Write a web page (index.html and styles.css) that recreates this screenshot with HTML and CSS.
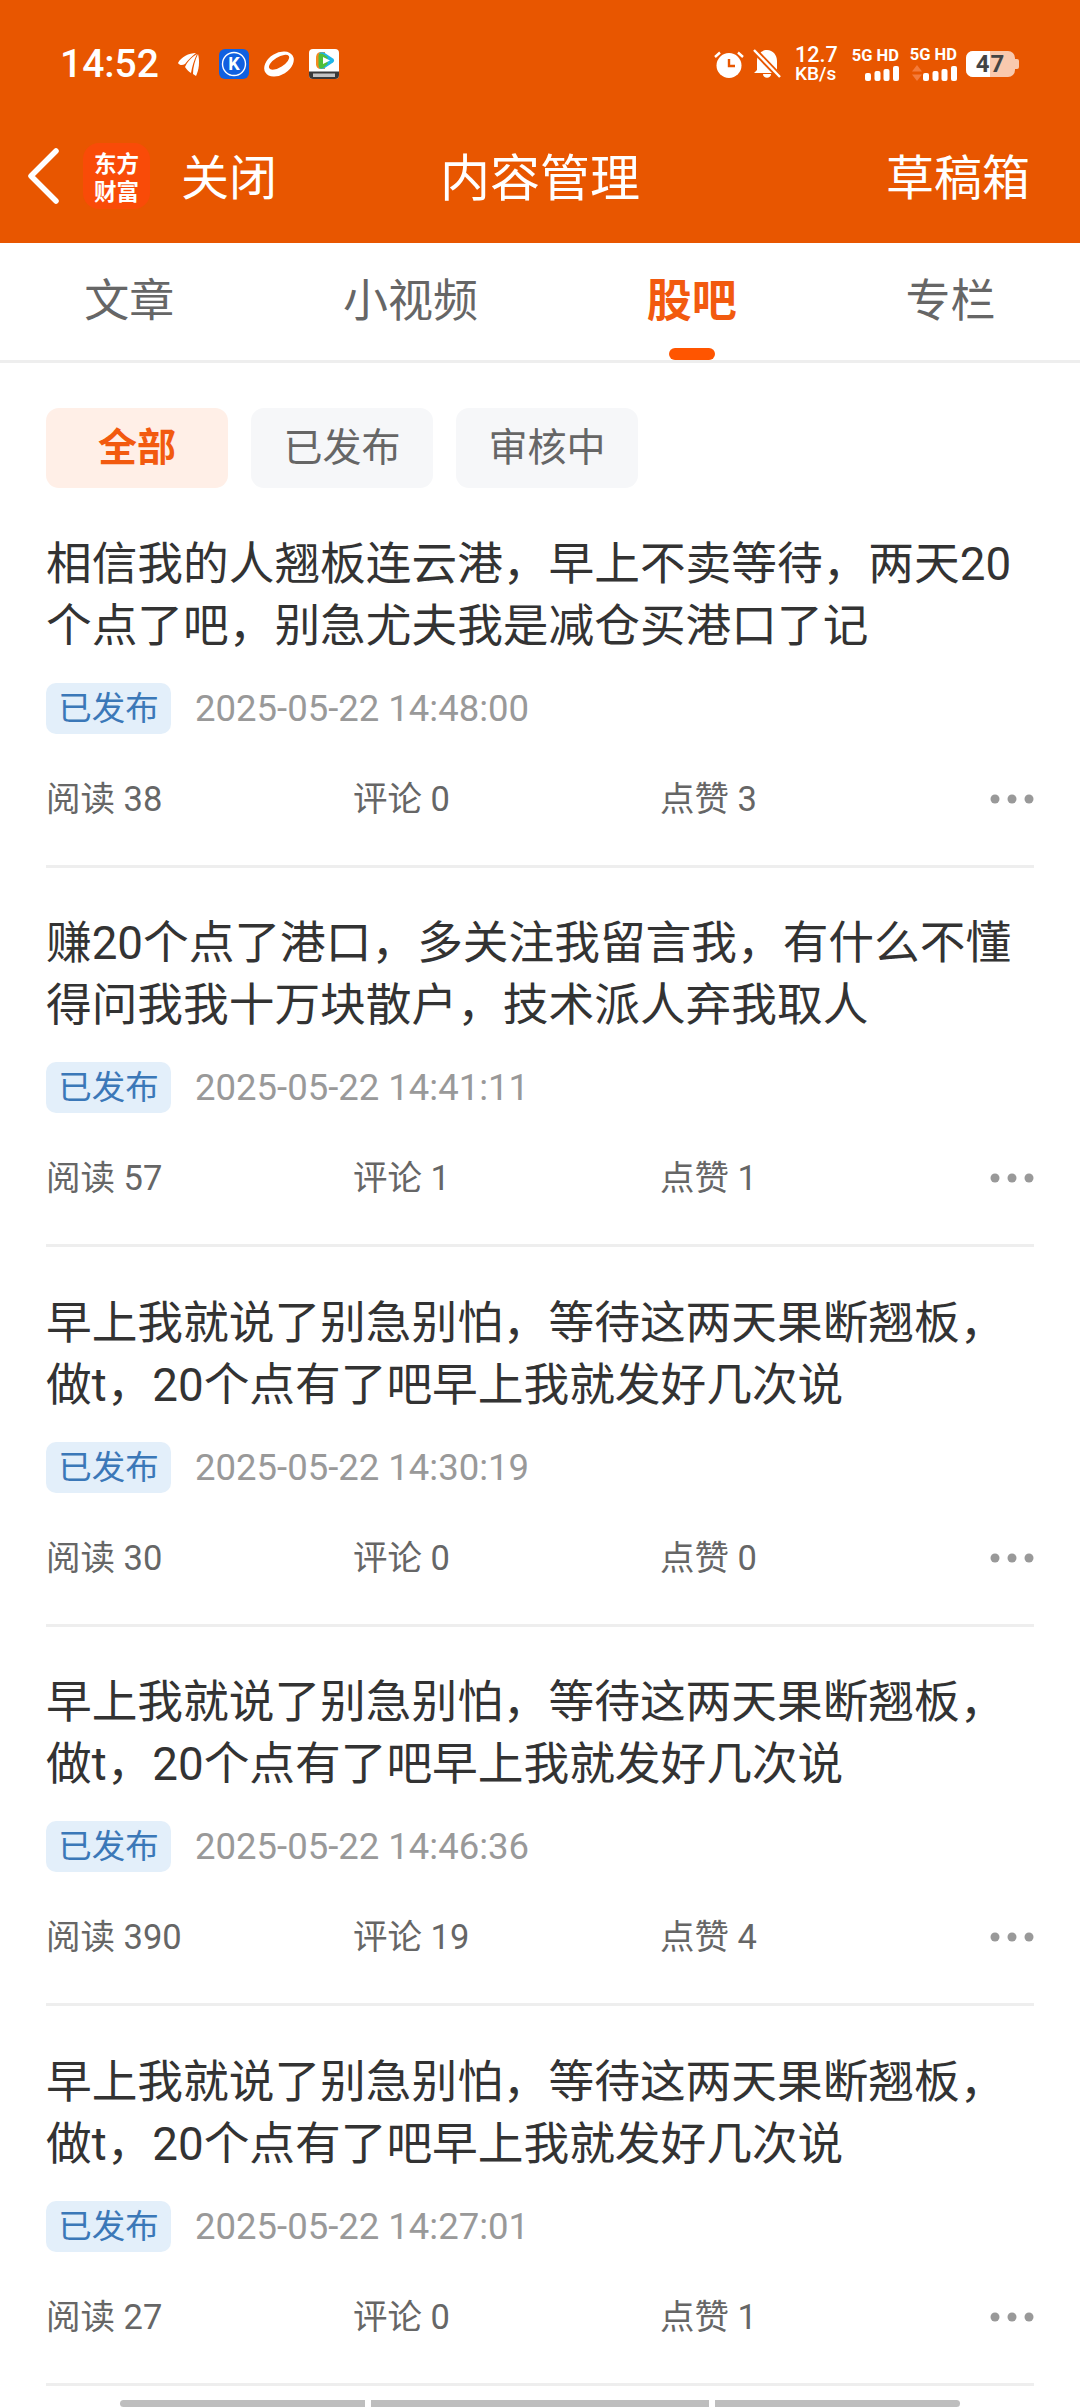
FILE: index.html
```html
<!DOCTYPE html>
<html lang="zh-CN">
<head>
<meta charset="utf-8">
<title>内容管理</title>
<link rel="stylesheet" href="styles.css">
</head>
<body>
<div class="page">
  <header class="header">
    <div class="status">
      <div class="status-left">
        <span class="time">14:52</span>
        <svg class="ic-feather" viewBox="0 0 24 24"><path fill="#fff" d="M19 1C12 1 4 5 1 11C3 14 6 13 8 12C11 8 15 4 19 1Z"/><path fill="#fff" d="M20 2C15 5 10 10 8 15C10 18 12 20 14 21C15 15 17 8 20 2Z"/><path fill="#fff" d="M21 2C18 8 16 15 16 22L19 24C22 18 23 9 21 2Z"/></svg>
        <svg class="ic-k" viewBox="0 0 30 30"><rect width="30" height="30" rx="6" fill="#1060E0"/><circle cx="15" cy="15" r="11.5" fill="none" stroke="#fff" stroke-width="1.4"/><text x="15" y="21" text-anchor="middle" class="k-letter">K</text></svg>
        <svg class="ic-orbit" viewBox="0 0 30 30"><ellipse cx="15" cy="15" rx="16" ry="11" transform="rotate(-32 15 15)" fill="#fff"/><ellipse cx="16" cy="13.500" rx="11.500" ry="5" transform="rotate(-32 15 15)" fill="#E85600"/></svg>
        <svg class="ic-video" viewBox="0 0 30 30"><rect width="30" height="30" rx="4" fill="#fff"/><path d="M0 22.500H30V26A4 4 0 0 1 26 30H4A4 4 0 0 1 0 26Z" fill="#3a3a3a"/><rect x="4" y="24.500" width="22" height="3.500" fill="#c4c4c4"/><path d="M7 9C7 5 9 3 12 3H16V20H12C9 20 7 18 7 15Z" fill="#F58A1F"/><path d="M10 5C10 3 13 3 15 3.500L24 9.500C25.500 10.500 25.500 12.500 24 13.500L15 19.500C13 20.500 10 20 10 18Z" fill="#1FB5E8"/><path d="M9.500 7C9.500 4 12 4 14 5L18.500 8 18.500 15 14 19C12 20 9.500 19 9.500 16Z" fill="#4FBF3A"/><path d="M14 8L21 11.500 14 15Z" fill="#fff"/></svg>
      </div>
      <div class="status-right">
        <svg class="ic-alarm" viewBox="0 0 30 28"><circle cx="15" cy="15.500" r="12.500" fill="#fff"/><path d="M15 9V16H21" fill="none" stroke="#E85600" stroke-width="2.400"/><path d="M1 7L6 2.500M29 7L24 2.500" stroke="#fff" stroke-width="2.400"/></svg>
        <svg class="ic-bell" viewBox="0 0 28 30"><path fill="#fff" d="M14 1C20 1 24 6 24 12V21L27 24H1L4 21V12C4 6 8 1 14 1Z"/><path fill="#fff" d="M10 25H18C18 30 10 30 10 25Z"/><path d="M1 1L27 28" stroke="#E85600" stroke-width="6"/><path d="M1 1L27 28" stroke="#fff" stroke-width="2.400"/></svg>
        <div class="speed"><span class="speed-num">12.7</span><span class="speed-unit">KB/s</span></div>
        <div class="net net-a">
          <span class="net-label">5G HD</span>
          <svg class="bars" viewBox="0 0 34 15"><rect y="7" width="6" height="8" rx="2" fill="#fff"/><rect x="9.500" y="5" width="6" height="10" rx="2" fill="#fff"/><rect x="18.500" y="3" width="6" height="12" rx="2" fill="#fff"/><rect x="28" width="6" height="15" rx="2" fill="#fff"/></svg>
        </div>
        <div class="net net-b">
          <span class="net-label">5G HD</span>
          <div class="net-row">
            <svg class="arrows" viewBox="0 0 10 16"><path d="M5 0L10 6.500H0Z" fill="#F47C3C"/><path d="M5 16L10 9.500H0Z" fill="#F47C3C"/></svg>
            <svg class="bars" viewBox="0 0 34 15"><rect y="7" width="6" height="8" rx="2" fill="#fff"/><rect x="9.500" y="5" width="6" height="10" rx="2" fill="#fff"/><rect x="18.500" y="3" width="6" height="12" rx="2" fill="#fff"/><rect x="28" width="6" height="15" rx="2" fill="#fff"/></svg>
          </div>
        </div>
        <div class="battery"><div class="battery-body"><span class="battery-fill"></span><span class="battery-num">47</span></div><span class="battery-nub"></span></div>
      </div>
    </div>
    <nav class="nav">
      <div class="nav-left">
        <svg class="back" viewBox="0 0 32 56"><path d="M29 3L4 28 29 53" fill="none" stroke="#fff" stroke-width="5.500" stroke-linecap="round" stroke-linejoin="round"/></svg>
        <div class="logo"><span>东方</span><span>财富</span></div>
        <span class="close">关闭</span>
      </div>
      <div class="nav-title">内容管理</div>
      <div class="nav-right">草稿箱</div>
    </nav>
  </header>

  <div class="tabs">
    <div class="tab">文章</div>
    <div class="tab">小视频</div>
    <div class="tab tab-active">股吧</div>
    <div class="tab">专栏</div>
  </div>

  <div class="chips">
    <div class="chip chip-active">全部</div>
    <div class="chip">已发布</div>
    <div class="chip">审核中</div>
  </div>

  <article class="item">
    <p class="title">相信我的人翘板连云港，早上不卖等待，两天20个点了吧，别急尤夫我是减仓买港口了记</p>
    <div class="meta"><span class="tag">已发布</span><span class="date">2025-05-22 14:48:00</span></div>
    <div class="stats"><span>阅读 38</span><span>评论 0</span><span>点赞 3</span><svg class="more" viewBox="0 0 44 10"><circle cx="5" cy="5" r="4.500"/><circle cx="22" cy="5" r="4.500"/><circle cx="39" cy="5" r="4.500"/></svg></div>
  </article>
  <article class="item">
    <p class="title">赚20个点了港口，多关注我留言我，有什么不懂得问我我十万块散户，技术派人弃我取人</p>
    <div class="meta"><span class="tag">已发布</span><span class="date">2025-05-22 14:41:11</span></div>
    <div class="stats"><span>阅读 57</span><span>评论 1</span><span>点赞 1</span><svg class="more" viewBox="0 0 44 10"><circle cx="5" cy="5" r="4.500"/><circle cx="22" cy="5" r="4.500"/><circle cx="39" cy="5" r="4.500"/></svg></div>
  </article>
  <article class="item">
    <p class="title">早上我就说了别急别怕，等待这两天果断翘板，做t，20个点有了吧早上我就发好几次说</p>
    <div class="meta"><span class="tag">已发布</span><span class="date">2025-05-22 14:30:19</span></div>
    <div class="stats"><span>阅读 30</span><span>评论 0</span><span>点赞 0</span><svg class="more" viewBox="0 0 44 10"><circle cx="5" cy="5" r="4.500"/><circle cx="22" cy="5" r="4.500"/><circle cx="39" cy="5" r="4.500"/></svg></div>
  </article>
  <article class="item">
    <p class="title">早上我就说了别急别怕，等待这两天果断翘板，做t，20个点有了吧早上我就发好几次说</p>
    <div class="meta"><span class="tag">已发布</span><span class="date">2025-05-22 14:46:36</span></div>
    <div class="stats"><span>阅读 390</span><span>评论 19</span><span>点赞 4</span><svg class="more" viewBox="0 0 44 10"><circle cx="5" cy="5" r="4.500"/><circle cx="22" cy="5" r="4.500"/><circle cx="39" cy="5" r="4.500"/></svg></div>
  </article>
  <article class="item">
    <p class="title">早上我就说了别急别怕，等待这两天果断翘板，做t，20个点有了吧早上我就发好几次说</p>
    <div class="meta"><span class="tag">已发布</span><span class="date">2025-05-22 14:27:01</span></div>
    <div class="stats"><span>阅读 27</span><span>评论 0</span><span>点赞 1</span><svg class="more" viewBox="0 0 44 10"><circle cx="5" cy="5" r="4.500"/><circle cx="22" cy="5" r="4.500"/><circle cx="39" cy="5" r="4.500"/></svg></div>
  </article>

  <div class="scroll">
    <span class="seg seg-first"></span>
    <span class="seg seg-mid"></span>
    <span class="seg seg-last"></span>
  </div>
</div>
</body>
</html>
```
FILE: styles.css
```css
* { box-sizing: border-box; }
html, body { margin: 0; padding: 0; }
body {
  background: #fff;
  font-family: Roboto, "Noto Sans CJK SC", sans-serif;
  color: #333;
}
.page { width: 1080px; height: 2408px; overflow: hidden; }

/* header */
.header { background: #E85600; height: 243px; color: #fff; }
.status {
  height: 128px;
  display: flex;
  justify-content: space-between;
  align-items: center;
  padding: 0 61px 0 60px;
}
.status-left, .status-right { display: flex; align-items: center; }
.time { font-size: 39px; font-weight: 500; line-height: 40px; width: 96px; }
.ic-feather { width: 24px; height: 24px; margin-left: 21px; }
.ic-k { width: 30px; height: 30px; margin-left: 18px; }
.k-letter { font: 700 18px Roboto, sans-serif; fill: #fff; }
.ic-orbit { width: 30px; height: 30px; margin-left: 15px; }
.ic-video { width: 30px; height: 30px; margin-left: 15px; }
.ic-alarm { width: 30px; height: 28px; }
.ic-bell { width: 28px; height: 30px; margin-left: 9px; }
.speed { display: flex; flex-direction: column; margin-left: 14px; width: 44px; color: #fff; }
.speed-num { font-size: 21.500px; font-weight: 500; line-height: 19px; }
.speed-unit { font-size: 19px; font-weight: 500; line-height: 19px; white-space: nowrap; }
.net { display: flex; flex-direction: column; align-items: flex-end; }
.net-a { margin-left: 13px; width: 47px; }
.net-b { margin-left: 10px; width: 48px; }
.net-label { font-size: 16.500px; font-weight: 700; line-height: 15px; white-space: nowrap; }
.net-row { display: flex; align-items: center; gap: 1px; }
.bars { width: 34px; height: 15px; margin-top: 3px; display: block; }
.arrows { width: 10px; height: 16px; margin-top: 3px; }
.battery { display: flex; align-items: center; margin-left: 9px; }
.battery-body {
  position: relative;
  width: 49px;
  height: 26px;
  border-radius: 7px;
  background: #F9C9AE;
  overflow: hidden;
  display: flex;
  align-items: center;
  justify-content: center;
}
.battery-fill { position: absolute; left: 0; top: 0; bottom: 0; width: 24px; background: #fff; }
.battery-num { position: relative; font-size: 24px; font-weight: 700; color: #444; line-height: 26px; letter-spacing: 1px; }
.battery-nub { width: 4px; height: 10px; background: #F9C9AE; border-radius: 0 2px 2px 0; }

.nav {
  height: 95px;
  display: grid;
  grid-template-columns: 1fr auto 1fr;
  align-items: center;
  padding: 0 50px;
}
.nav-left { display: flex; align-items: center; }
.back { width: 32px; height: 56px; margin-left: -23px; }
.logo {
  width: 67px;
  height: 66px;
  margin-left: 24px;
  border-radius: 16px;
  background: #F94B08;
  display: flex;
  flex-direction: column;
  align-items: center;
  justify-content: center;
  font-family: "Noto Sans CJK SC", sans-serif;
  font-size: 22.500px;
  font-weight: 700;
  line-height: 28px;
}
.close { margin: 0 0 3px 31px; font-size: 48px; line-height: 60px; font-family: "Noto Sans CJK SC", sans-serif; }
.nav-title { margin-bottom: 3px; font-size: 50px; line-height: 60px; font-family: "Noto Sans CJK SC", sans-serif; }
.nav-right { margin-bottom: 3px; text-align: right; font-size: 48px; line-height: 60px; font-family: "Noto Sans CJK SC", sans-serif; }

/* tabs */
.tabs {
  height: 120px;
  display: flex;
  justify-content: space-around;
  align-items: stretch;
  border-bottom: 3px solid #EEEEEE;
}
.tab {
  position: relative;
  font-size: 45px;
  line-height: 117px;
  color: #666;
}
.tab-active { color: #F25A0F; font-weight: 700; }
.tab-active::after {
  content: "";
  position: absolute;
  left: 22px;
  bottom: 0;
  width: 46px;
  height: 12px;
  border-radius: 6px;
  background: #FF5500;
}

/* chips */
.chips { display: flex; gap: 23px; padding: 45px 46px 0; }
.chip {
  width: 182px;
  height: 80px;
  border-radius: 13px;
  background: #F6F7F9;
  color: #666;
  font-size: 39px;
  line-height: 80px;
  text-align: center;
}
.chip-active { background: #FFEFE7; color: #F25A0F; font-weight: 700; }

/* items */
.item {
  margin: 0 46px;
  padding-top: 45.500px;
  border-bottom: 3px solid #EEEEEE;
}
.title {
  margin: 0;
  height: 124px;
  font-size: 45.700px;
  line-height: 62px;
  color: #333;
}
.meta { display: flex; align-items: center; margin-top: 25px; height: 51px; }
.tag {
  width: 125px;
  height: 51px;
  border-radius: 10px;
  background: #E3EFFA;
  color: #3B78B8;
  font-size: 33.500px;
  line-height: 51px;
  text-align: center;
}
.date { margin-left: 24px; font-size: 36.500px; color: #999; }
.stats {
  display: grid;
  grid-template-columns: 307px 307px 1fr 44px;
  align-items: center;
  height: 44px;
  margin-top: 43px;
  margin-bottom: 44px;
  font-size: 34.500px;
  line-height: 44px;
  color: #666;
}
.more { width: 44px; height: 10px; fill: #999; }

/* scroll indicator */
.scroll { display: flex; gap: 6px; margin: 14px 0 0 120px; }
.seg { height: 7px; background: #BEBEBE; }
.seg-first { width: 245px; border-radius: 4px 0 0 4px; }
.seg-mid { width: 338px; }
.seg-last { width: 245px; border-radius: 0 4px 4px 0; }
```
